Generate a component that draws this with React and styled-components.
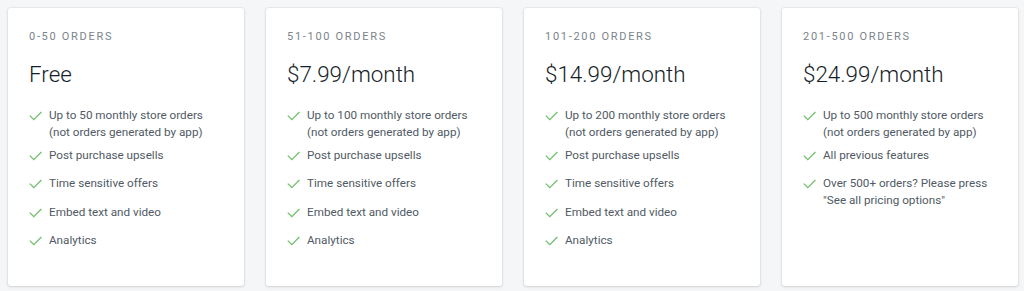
import React from 'react'
import styled, { createGlobalStyle } from 'styled-components'

const GlobalStyle = createGlobalStyle`
  body {
    margin: 0;
    background: #f4f6f8;
    font-family: Roboto, "Liberation Sans", sans-serif;
  }
`

const Plans = styled.div`
  display: grid;
  grid-template-columns: repeat(4, 236px);
  gap: 22px;
  padding: 8px 6px 5px 8px;
`

const Card = styled.section`
  height: 278px;
  box-sizing: border-box;
  background: #fff;
  border-radius: 3px;
  box-shadow: 0 0 0 1px rgba(63, 63, 68, 0.05), 0 1px 3px 0 rgba(63, 63, 68, 0.15);
  padding: 22px 20px 0 21px;
`

const Range = styled.div`
  font-size: 11px;
  line-height: 14px;
  letter-spacing: 1.7px;
  color: #7b838c;
  text-transform: uppercase;
`

const Price = styled.div`
  margin-top: 15px;
  font-size: 22.4px;
  font-weight: 300;
  line-height: 30px;
  color: #161e27;
`

const Features = styled.ul`
  list-style: none;
  margin: 18px 0 0;
  padding: 0;
  display: flex;
  flex-direction: column;
  gap: 11.5px;
`

const Feature = styled.li`
  display: flex;
  gap: 7px;
  font-size: 11.7px;
  line-height: 17px;
  color: #505a64;

  &:first-child {
    margin-bottom: -6px;
  }
`

const Check = styled.svg`
  flex: none;
  width: 13px;
  height: 17px;
`

const plans = [
  {
    range: '0-50 orders',
    price: 'Free',
    features: [
      'Up to 50 monthly store orders (not orders generated by app)',
      'Post purchase upsells',
      'Time sensitive offers',
      'Embed text and video',
      'Analytics',
    ],
  },
  {
    range: '51-100 orders',
    price: '$7.99/month',
    features: [
      'Up to 100 monthly store orders (not orders generated by app)',
      'Post purchase upsells',
      'Time sensitive offers',
      'Embed text and video',
      'Analytics',
    ],
  },
  {
    range: '101-200 orders',
    price: '$14.99/month',
    features: [
      'Up to 200 monthly store orders (not orders generated by app)',
      'Post purchase upsells',
      'Time sensitive offers',
      'Embed text and video',
      'Analytics',
    ],
  },
  {
    range: '201-500 orders',
    price: '$24.99/month',
    features: [
      'Up to 500 monthly store orders (not orders generated by app)',
      'All previous features',
      'Over 500+ orders? Please press "See all pricing options"',
    ],
  },
]

const CheckIcon = () => (
  <Check viewBox="0 0 13 17">
    <path d="M0.8 8.6l4 4L12.4 5" fill="none" stroke="#72bf6c" strokeWidth="1.3" />
  </Check>
)

const App = () => (
  <>
    <GlobalStyle />
    <Plans>
      {plans.map(plan => (
        <Card key={plan.range}>
          <Range>{plan.range}</Range>
          <Price>{plan.price}</Price>
          <Features>
            {plan.features.map(f => (
              <Feature key={f}>
                <CheckIcon />
                <span>{f}</span>
              </Feature>
            ))}
          </Features>
        </Card>
      ))}
    </Plans>
  </>
)

export default App
